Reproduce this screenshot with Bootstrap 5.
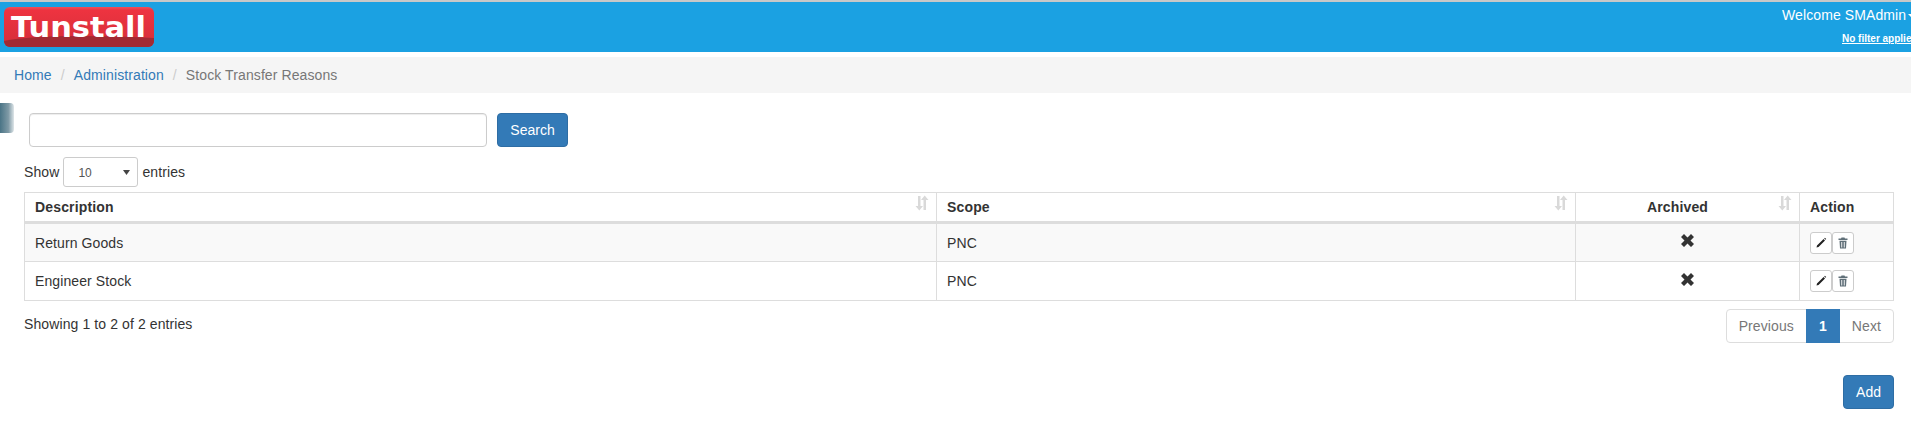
<!DOCTYPE html>
<html lang="en">
<head>
<meta charset="utf-8">
<title>Stock Transfer Reasons</title>
<link href="https://cdn.jsdelivr.net/npm/bootstrap@5.3.0/dist/css/bootstrap.min.css" rel="stylesheet">
<style>
html,body{overflow:hidden}
body{font-family:"Liberation Sans",Arial,sans-serif;font-size:14px;line-height:20px;letter-spacing:.1px;color:#333;background:#fff}
a{color:#337ab7;text-decoration:none}
.topbar{height:52px;background:#1ba1e2;border-top:2px solid #c8c8c8;overflow:hidden}
.logo-art{display:block;width:150px;height:40px;margin:5px 0 0 4px;flex:none}
.logo-word{font-family:"DejaVu Sans","Liberation Sans",sans-serif;font-weight:700;font-size:29px;fill:#fff;letter-spacing:0}
.user-area{width:129px;flex:none;padding-top:3px;white-space:nowrap;color:#fff;overflow:hidden}
.caret-down{display:inline-block;border-left:4px solid transparent;border-right:4px solid transparent;border-top:4px solid #fff;vertical-align:middle;margin-left:2px}
.filter-link{display:block;color:#fff;font-size:10px;font-weight:700;text-decoration:underline;line-height:14px;margin-top:7px;padding-left:60px;letter-spacing:0}
.crumbs{margin:5px 0 0;height:36px;background:#f5f5f5;padding:8px 14px;list-style:none;border-radius:0;--bs-breadcrumb-divider-color:#ccc;--bs-breadcrumb-item-active-color:#777;--bs-breadcrumb-margin-bottom:0}
.crumbs .breadcrumb-item+.breadcrumb-item{padding-left:9px}
.crumbs .breadcrumb-item+.breadcrumb-item::before{padding-right:9px;color:#ccc}
.side-tab{width:14px;height:30px;margin-top:10px;flex:none;border-radius:0 4px 4px 0;background:linear-gradient(90deg,#4a7486,#7f9aa6 60%,#dfe6e9)}
.search-input{width:458px;height:34px;margin:0 2px 0 15px;border:1px solid #ccc;border-radius:4px;box-shadow:inset 0 1px 1px rgba(0,0,0,.075);padding:6px 12px;font-size:14px}
.blue-btn{background:#337ab7;border:1px solid #2e6da4;color:#fff;height:34px;font-size:14px;line-height:20px;padding:6px 12px;border-radius:4px}
.blue-btn:hover{background:#286090;color:#fff}
.search-row .blue-btn{width:71px;padding-left:0;padding-right:0}
.search-row{margin-top:20px}
.len-row{margin:10px 0 0 24px;height:30px}
.len-select{width:75px;height:30px;margin:0 4px;border:1px solid #ccc;border-radius:3px;padding:5px 10px 5px 14px;font-size:12px;font-family:inherit;color:#555;appearance:none;background:#fff url("data:image/svg+xml,%3Csvg xmlns='http://www.w3.org/2000/svg' width='7' height='5'%3E%3Cpath d='M0 0h7L3.500 5z' fill='%23444'/%3E%3C/svg%3E") no-repeat right 7px center}
.data-wrap{margin:5px 17px 0 24px}
.grid-table{width:100%;border-collapse:collapse;table-layout:fixed;margin:0;color:#333}
.grid-table th,.grid-table td{border:1px solid #ddd;padding:8px 10px;line-height:20px;vertical-align:middle;position:relative}
.grid-table thead th{height:29px;padding:4px 10px;border-bottom:3px solid #ddd;font-weight:700;letter-spacing:.15px}
.grid-table thead th.arch-head{padding-right:30px}
.grid-table tbody td{height:39px;padding-top:6px;padding-bottom:6px}
.grid-table tbody tr:nth-child(odd) td{background:#f9f9f9}
.sort-mark{position:absolute;top:2px;right:7px;width:14px;height:16px;fill:#d9d9d9}
.cross-mark{display:block;margin:-4px auto 0}
.mini-btn{width:22px;height:22px;padding:0;background:#fff;border:1px solid #ccc;border-radius:3px;display:inline-flex;align-items:center;justify-content:center;vertical-align:middle}
.mini-btn svg{width:12px;height:12px}
.foot-row{margin:8px 17px 0 24px}
.showing-note{padding-top:5px}
.pager{margin:0;--bs-pagination-color:#777;--bs-pagination-border-color:#ddd;--bs-pagination-active-bg:#337ab7;--bs-pagination-active-border-color:#337ab7;--bs-pagination-padding-x:12px;--bs-pagination-padding-y:6px;--bs-pagination-font-size:14px;--bs-pagination-border-radius:4px}
.pager .page-link{line-height:20px;height:34px}
.pager .page-item.active .page-link{font-weight:700}
.add-row{margin:32px 17px 0 0}
</style>
</head>
<body>
<header class="topbar d-flex justify-content-between">
  <svg class="logo-art" viewBox="0 0 150 40" role="img" aria-label="Tunstall">
    <defs><linearGradient id="lg" x1="0" y1="0" x2="0" y2="1"><stop offset="0" stop-color="#f0505a"/><stop offset=".08" stop-color="#ee3340"/><stop offset="1" stop-color="#d42f3a"/></linearGradient></defs>
    <rect width="150" height="40" rx="6" fill="url(#lg)"/>
    <path d="M0 34Q40 26 150 31V34a6 6 0 0 1-6 6H6a6 6 0 0 1-6-6z" fill="#a22a33"/>
    <text class="logo-word" x="7" y="30" textLength="135" lengthAdjust="spacingAndGlyphs">Tunstall</text>
  </svg>
  <div class="user-area">
    <div>Welcome SMAdmin<span class="caret-down"></span></div>
    <a class="filter-link" href="#">No filter applied</a>
  </div>
</header>
<ol class="breadcrumb crumbs">
  <li class="breadcrumb-item"><a href="#">Home</a></li>
  <li class="breadcrumb-item"><a href="#">Administration</a></li>
  <li class="breadcrumb-item active">Stock Transfer Reasons</li>
</ol>
<div class="d-flex align-items-start">
  <div class="side-tab"></div>
  <div class="d-flex gap-2 search-row">
    <input class="search-input" type="text" aria-label="Search">
    <button class="blue-btn" type="button">Search</button>
  </div>
</div>
<div class="d-flex align-items-center len-row">
  <span>Show</span>
  <select class="len-select" aria-label="entries"><option>10</option><option>25</option><option>50</option></select>
  <span>entries</span>
</div>
<div class="data-wrap">
  <table class="grid-table">
    <colgroup><col style="width:912px"><col style="width:639px"><col style="width:224px"><col></colgroup>
    <thead>
      <tr>
        <th>Description<svg class="sort-mark" viewBox="0 0 14 16"><path d="M3 1h2.500v10H8l-3.700 4.500L.5 11H3zM11 15H8.500V5H6l3.700-4.500L13.500 5H11z"/></svg></th>
        <th>Scope<svg class="sort-mark" viewBox="0 0 14 16"><path d="M3 1h2.500v10H8l-3.700 4.500L.5 11H3zM11 15H8.500V5H6l3.700-4.500L13.500 5H11z"/></svg></th>
        <th class="text-center arch-head">Archived<svg class="sort-mark" viewBox="0 0 14 16"><path d="M3 1h2.500v10H8l-3.700 4.500L.5 11H3zM11 15H8.500V5H6l3.700-4.500L13.500 5H11z"/></svg></th>
        <th>Action</th>
      </tr>
    </thead>
    <tbody>
      <tr>
        <td>Return Goods</td><td>PNC</td>
        <td class="text-center"><svg class="cross-mark" width="13" height="13" viewBox="0 0 13 13"><path d="M0 3 3 0l3.500 3.500L10 0l3 3-3.500 3.500L13 10l-3 3-3.500-3.500L3 13l-3-3 3.500-3.500z" fill="#333"/></svg></td>
        <td><span class="d-inline-flex"><button class="mini-btn" type="button" aria-label="Edit"><svg viewBox="0 0 12 12"><path d="M1.500 10.500l.5-2L8.600 2l1.400 1.400-6.500 6.500zM9.200 1.400l.7-.6 1.300 1.300-.6.700z" fill="#222"/></svg></button><button class="mini-btn" type="button" aria-label="Delete"><svg viewBox="0 0 12 12"><path d="M4.500.5h3l.5 1h2.500v1.500h-9V1.500H4zM2.500 3.800h7L9 11.500H3zM4.300 5v5.500h.9V5zm2.500 0v5.500h.9V5z" fill="#5f6f78"/></svg></button></span></td>
      </tr>
      <tr>
        <td>Engineer Stock</td><td>PNC</td>
        <td class="text-center"><svg class="cross-mark" width="13" height="13" viewBox="0 0 13 13"><path d="M0 3 3 0l3.500 3.500L10 0l3 3-3.500 3.500L13 10l-3 3-3.500-3.500L3 13l-3-3 3.500-3.500z" fill="#333"/></svg></td>
        <td><span class="d-inline-flex"><button class="mini-btn" type="button" aria-label="Edit"><svg viewBox="0 0 12 12"><path d="M1.500 10.500l.5-2L8.600 2l1.400 1.400-6.500 6.500zM9.200 1.400l.7-.6 1.300 1.300-.6.700z" fill="#222"/></svg></button><button class="mini-btn" type="button" aria-label="Delete"><svg viewBox="0 0 12 12"><path d="M4.500.5h3l.5 1h2.500v1.500h-9V1.500H4zM2.500 3.800h7L9 11.500H3zM4.300 5v5.500h.9V5zm2.500 0v5.500h.9V5z" fill="#5f6f78"/></svg></button></span></td>
      </tr>
    </tbody>
  </table>
</div>
<div class="d-flex justify-content-between align-items-start foot-row">
  <div class="showing-note">Showing 1 to 2 of 2 entries</div>
  <ul class="pagination pager">
    <li class="page-item"><a class="page-link" href="#">Previous</a></li>
    <li class="page-item active"><a class="page-link" href="#">1</a></li>
    <li class="page-item"><a class="page-link" href="#">Next</a></li>
  </ul>
</div>
<div class="d-flex justify-content-end add-row"><button class="blue-btn" type="button">Add</button></div>
<script src="https://cdn.jsdelivr.net/npm/bootstrap@5.3.0/dist/js/bootstrap.bundle.min.js"></script>
</body>
</html>
